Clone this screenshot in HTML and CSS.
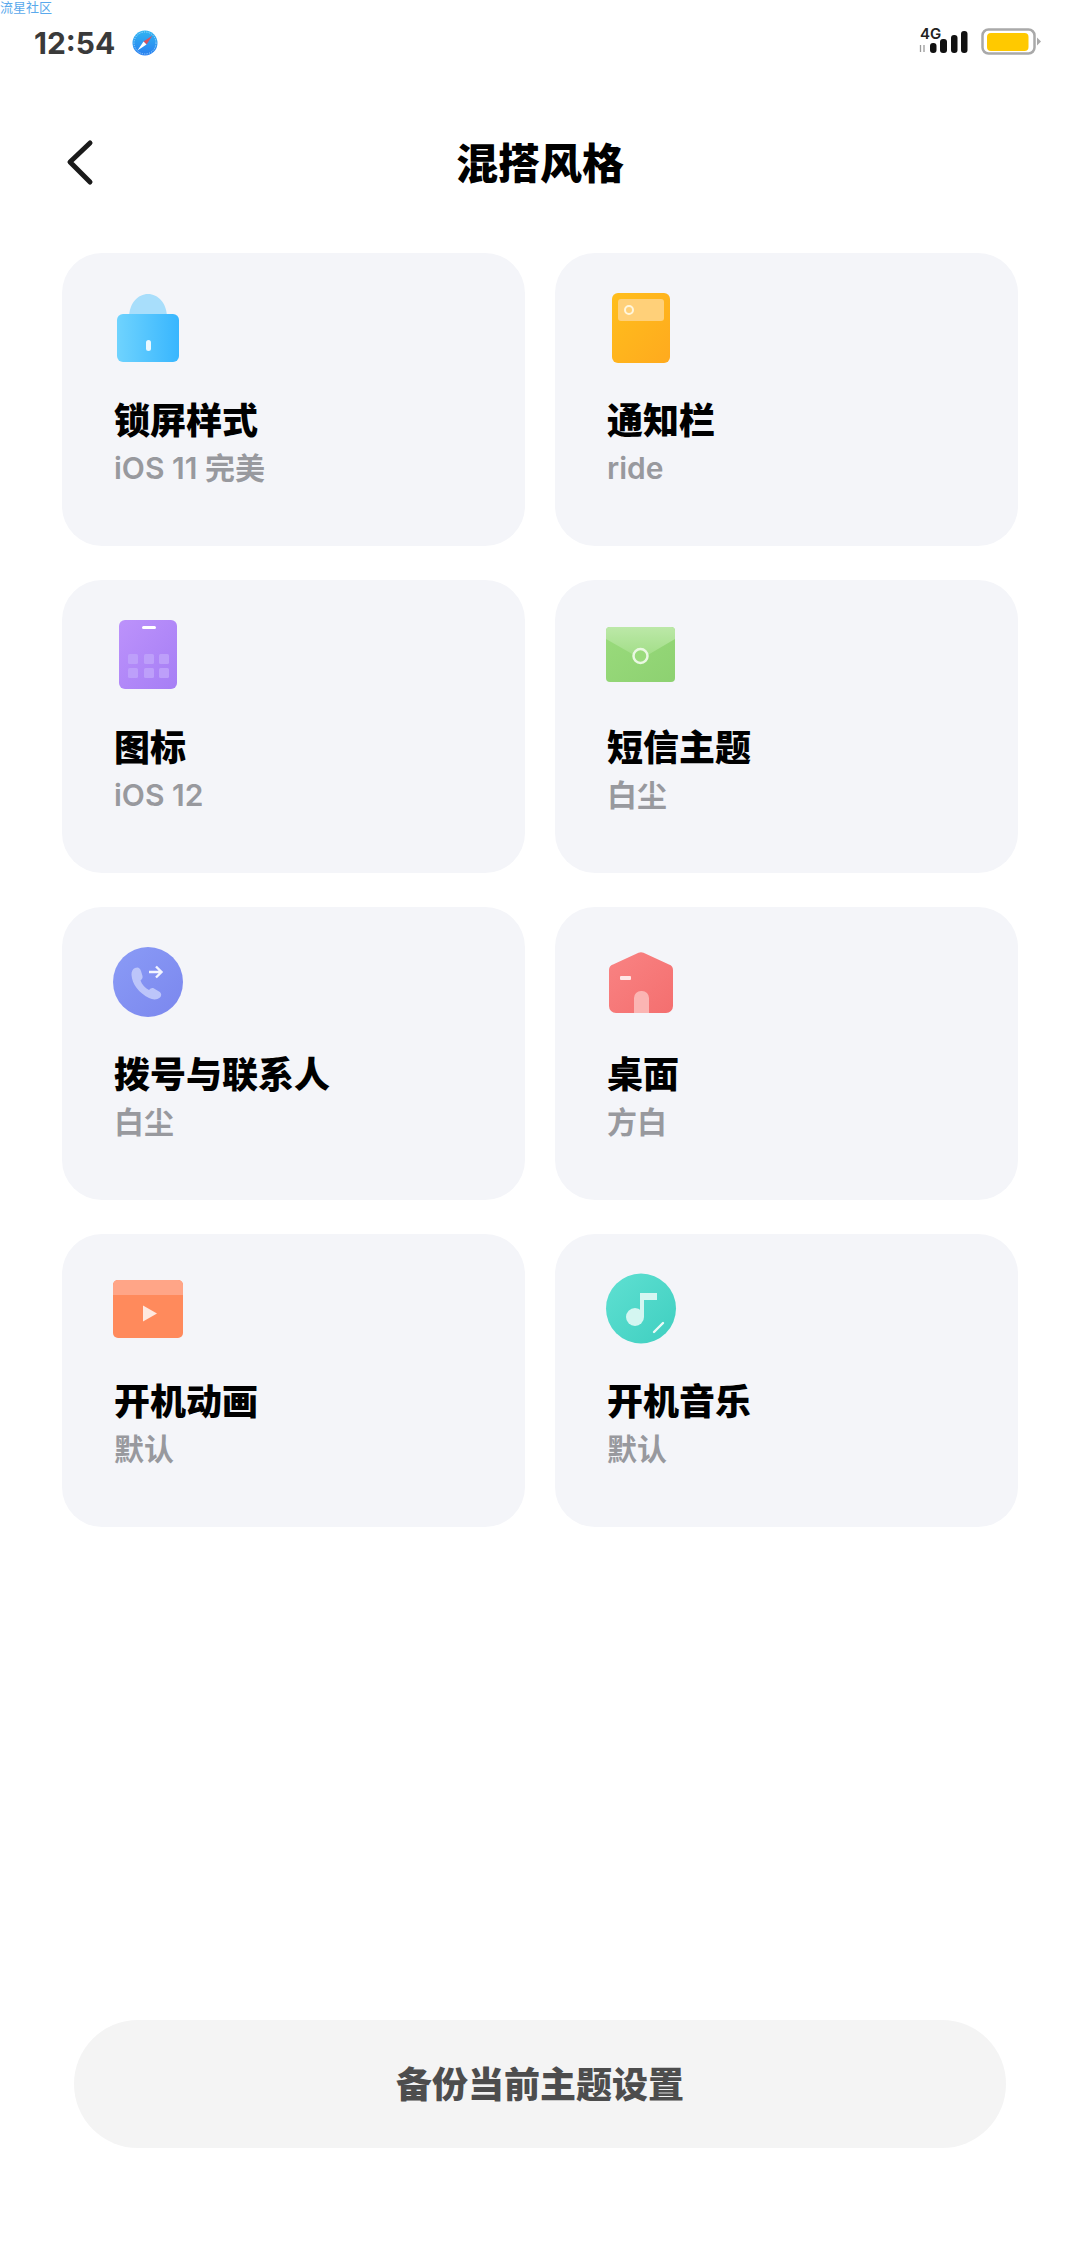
FILE: index.html
```html
<!DOCTYPE html>
<html lang="zh-CN">
<head>
  <meta charset="UTF-8" />
  <meta name="viewport" content="width=device-width, initial-scale=1.0"/>
  <title>混搭风格</title>
  <link rel="stylesheet" href="styles.css">
</head>
<body>

  <div class="watermark">流星社区</div>

  <div class="status-bar">
    <div class="status-left">
      <span class="time">12:54</span>
      <svg class="compass" width="26" height="26" viewBox="0 0 26 26">
        <defs>
          <linearGradient id="compassBg" x1="0" y1="0" x2="0" y2="1">
            <stop offset="0" stop-color="#2fb4f2"/>
            <stop offset="1" stop-color="#2a7ff0"/>
          </linearGradient>
        </defs>
        <circle cx="13" cy="13" r="12.5" fill="url(#compassBg)"/>
        <circle cx="13" cy="13" r="11" fill="none" stroke="#bfe6fb" stroke-width="0.8" stroke-dasharray="1.2 1.2"/>
        <polygon points="20.5,5.5 11.5,11.5 14.5,14.5" fill="#d8525f"/>
        <polygon points="5.5,20.5 11.5,11.5 14.5,14.5" fill="#ffffff"/>
      </svg>
    </div>
    <div class="status-right">
      <div class="signal">
        <span class="net">4G</span>
        <svg width="50" height="26" viewBox="0 0 50 26">
          <path d="M2.500 17v7M6 17v7" stroke="#9a9a9a" stroke-width="1.300" fill="none"/>
          <rect x="12" y="15" width="6.500" height="10" rx="3" fill="#111"/>
          <rect x="22" y="11" width="7" height="14" rx="3" fill="#111"/>
          <rect x="33" y="7" width="6.500" height="18" rx="3" fill="#111"/>
          <rect x="43" y="3" width="6.500" height="22" rx="3" fill="#111"/>
        </svg>
      </div>
      <svg class="battery" width="60" height="28" viewBox="0 0 60 28">
        <rect x="1.500" y="1.500" width="52" height="24" rx="6" fill="#fff" stroke="#a9a9a9" stroke-width="2.500"/>
        <rect x="6" y="5" width="41.500" height="18" rx="4" fill="#ffc900"/>
        <path d="M56 9.500l4 4-4 4z" fill="#a9a9a9"/>
      </svg>
    </div>
  </div>

  <header class="page-header">
    <svg class="back" width="40" height="50" viewBox="0 0 40 50">
      <path d="M30 6L10 25l20 20" fill="none" stroke="#1a1a1a" stroke-width="5" stroke-linecap="round" stroke-linejoin="round"/>
    </svg>
    <h1>混搭风格</h1>
  </header>

  <div class="theme-grid">

    <div class="card">
      <svg class="card-icon" width="80" height="80" viewBox="0 0 80 80">
        <defs>
          <linearGradient id="lockBg" x1="0" y1="0" x2="1" y2="0">
            <stop offset="0" stop-color="#6fd3fe"/>
            <stop offset="1" stop-color="#38b6fe"/>
          </linearGradient>
        </defs>
        <path d="M21 30C21 15 30 6 40 6s19 9 19 24z" fill="#a8defb"/>
        <rect x="9" y="26" width="62" height="48" rx="6" fill="url(#lockBg)"/>
        <rect x="38" y="52" width="5" height="11" rx="2.500" fill="#eaf8ff"/>
      </svg>
      <div class="card-title">锁屏样式</div>
      <div class="card-sub">iOS 11 完美</div>
    </div>

    <div class="card">
      <svg class="card-icon" width="80" height="80" viewBox="0 0 80 80">
        <defs>
          <linearGradient id="noteBg" x1="0" y1="0" x2="1" y2="1">
            <stop offset="0" stop-color="#ffbe1c"/>
            <stop offset="1" stop-color="#ffaa1e"/>
          </linearGradient>
        </defs>
        <rect x="11" y="5" width="58" height="70" rx="6" fill="url(#noteBg)"/>
        <rect x="17" y="11" width="46" height="22" rx="3" fill="#ffd079"/>
        <circle cx="28" cy="22" r="4" fill="none" stroke="#fff6dc" stroke-width="2"/>
      </svg>
      <div class="card-title">通知栏</div>
      <div class="card-sub">ride</div>
    </div>

    <div class="card">
      <svg class="card-icon" width="80" height="80" viewBox="0 0 80 80">
        <defs>
          <linearGradient id="iconBg" x1="0" y1="0" x2="1" y2="1">
            <stop offset="0" stop-color="#bc92fb"/>
            <stop offset="1" stop-color="#a67ef5"/>
          </linearGradient>
        </defs>
        <rect x="11" y="5" width="58" height="69" rx="6" fill="url(#iconBg)"/>
        <rect x="34" y="11" width="14" height="3" rx="1.500" fill="#fff"/>
        <g fill="#bd9ffa">
          <rect x="20" y="39" width="10" height="10" rx="1.500"/>
          <rect x="36" y="39" width="10" height="10" rx="1.500"/>
          <rect x="51" y="39" width="10" height="10" rx="1.500"/>
          <rect x="20" y="53" width="10" height="10" rx="1.500"/>
          <rect x="36" y="53" width="10" height="10" rx="1.500"/>
          <rect x="51" y="53" width="10" height="10" rx="1.500"/>
        </g>
      </svg>
      <div class="card-title">图标</div>
      <div class="card-sub">iOS 12</div>
    </div>

    <div class="card">
      <svg class="card-icon" width="80" height="80" viewBox="0 0 80 80">
        <defs>
          <linearGradient id="mailBg" x1="0" y1="0" x2="1" y2="1">
            <stop offset="0" stop-color="#9adb7c"/>
            <stop offset="1" stop-color="#8dd171"/>
          </linearGradient>
          <linearGradient id="mailFlap" x1="0" y1="0" x2="0" y2="1">
            <stop offset="0" stop-color="#bce8a8"/>
            <stop offset="1" stop-color="#9fdd84"/>
          </linearGradient>
        </defs>
        <rect x="5" y="12" width="69" height="55" rx="4" fill="url(#mailBg)"/>
        <path d="M5 24v-8a4 4 0 0 1 4-4h61a4 4 0 0 1 4 4v8L40 44z" fill="url(#mailFlap)"/>
        <circle cx="39.500" cy="41" r="7" fill="#9adb7c" stroke="#eaf8e2" stroke-width="2.500"/>
      </svg>
      <div class="card-title">短信主题</div>
      <div class="card-sub">白尘</div>
    </div>

    <div class="card">
      <svg class="card-icon" width="80" height="80" viewBox="0 0 80 80">
        <defs>
          <linearGradient id="phoneBg" x1="0" y1="0" x2="1" y2="1">
            <stop offset="0" stop-color="#8a9bf6"/>
            <stop offset="1" stop-color="#7b87ee"/>
          </linearGradient>
        </defs>
        <circle cx="40" cy="40" r="35" fill="url(#phoneBg)"/>
        <path d="M27 26c3-1.500 5 0 6 3l1.500 5c.5 2-.5 3-2 4.500 1.500 4 4.500 7.500 8.500 9.500 1.500-1.500 3-2.500 5-1.500l5 3c2.500 1.500 3 4 1 6-3 2.500-7 2.500-11 .5C31 51 24 42 23.500 33c-.2-3 1-6 3.500-7z" fill="#bcc5fa"/>
        <path d="M41 30h12M48 24.500l5.500 5.500-5.500 5.500" fill="none" stroke="#f2f4ff" stroke-width="2.400"/>
      </svg>
      <div class="card-title">拨号与联系人</div>
      <div class="card-sub">白尘</div>
    </div>

    <div class="card">
      <svg class="card-icon" width="80" height="80" viewBox="0 0 80 80">
        <defs>
          <linearGradient id="homeBg" x1="0" y1="0" x2="1" y2="1">
            <stop offset="0" stop-color="#f98383"/>
            <stop offset="1" stop-color="#f46f6f"/>
          </linearGradient>
        </defs>
        <path d="M37.500 10.800a6 6 0 0 1 5 0L68 22.500a6 6 0 0 1 4 5.500V64a7 7 0 0 1-7 7H15a7 7 0 0 1-7-7V28a6 6 0 0 1 4-5.500z" fill="url(#homeBg)"/>
        <rect x="19" y="34" width="11" height="4" rx="1" fill="#ffe6e6"/>
        <path d="M33 71V56a7 7 0 0 1 7-7h1a7 7 0 0 1 7 7v15z" fill="#fbb5b3"/>
      </svg>
      <div class="card-title">桌面</div>
      <div class="card-sub">方白</div>
    </div>

    <div class="card">
      <svg class="card-icon" width="80" height="80" viewBox="0 0 80 80">
        <rect x="5" y="11" width="70" height="58" rx="5" fill="#ff8a5c"/>
        <path d="M5 26V16a5 5 0 0 1 5-5h60a5 5 0 0 1 5 5v10z" fill="#ffa587"/>
        <path d="M35 36.500l14 8-14 8z" fill="#ffe9e0"/>
      </svg>
      <div class="card-title">开机动画</div>
      <div class="card-sub">默认</div>
    </div>

    <div class="card">
      <svg class="card-icon" width="80" height="80" viewBox="0 0 80 80">
        <defs>
          <linearGradient id="musicBg" x1="0" y1="0" x2="1" y2="1">
            <stop offset="0" stop-color="#5fe0d2"/>
            <stop offset="1" stop-color="#3fcfc0"/>
          </linearGradient>
        </defs>
        <circle cx="40" cy="39.500" r="35" fill="url(#musicBg)"/>
        <circle cx="34" cy="48" r="9" fill="#d4f6f1"/>
        <path d="M39 48V24h17v7H43v17z" fill="#d4f6f1"/>
        <path d="M53 63l9-9" stroke="#eafbf8" stroke-width="2.400" stroke-linecap="round"/>
      </svg>
      <div class="card-title">开机音乐</div>
      <div class="card-sub">默认</div>
    </div>

  </div>

  <button class="backup-btn">备份当前主题设置</button>

</body>
</html>
```

FILE: styles.css
```css
html, body {
  height: 100%;
}

body {
  margin: 0;
  padding: 0;
  position: relative;
  width: 1080px;
  height: 2248px;
  display: flex;
  flex-direction: column;
  background-color: #fff;
  font-family: "Noto Sans CJK SC", "Noto Sans", sans-serif;
  overflow: hidden;
}

.watermark {
  position: absolute;
  top: 0;
  left: 0;
  font-size: 13px;
  line-height: 14px;
  color: #5aa9ec;
}

.status-bar {
  height: 86px;
  padding: 0 39px 0 34px;
  display: flex;
  justify-content: space-between;
  align-items: center;
  box-sizing: border-box;
}

.status-left {
  display: flex;
  align-items: center;
  gap: 17px;
}

.time {
  font-family: Inter, "Liberation Sans", sans-serif;
  font-size: 30px;
  font-weight: 700;
  color: #3a3a3a;
}

.compass {
  display: block;
}

.status-right {
  display: flex;
  align-items: center;
  gap: 13px;
}

.signal {
  position: relative;
  width: 50px;
  height: 26px;
  margin-bottom: 4px;
}

.signal svg {
  display: block;
}

.net {
  position: absolute;
  left: 2px;
  top: -1px;
  font-family: Inter, "Liberation Sans", sans-serif;
  font-size: 15px;
  line-height: 13px;
  font-weight: 600;
  color: #222;
}

.battery {
  display: block;
  margin-bottom: 2px;
}

.page-header {
  position: relative;
  height: 100px;
  margin-top: 27px;
  display: flex;
  align-items: center;
  justify-content: center;
}

.back {
  position: absolute;
  left: 60px;
  top: 24px;
}

.page-header h1 {
  margin: 0 0 4px;
  font-size: 42px;
  line-height: 96px;
  font-weight: 900;
  color: #000;
}

.theme-grid {
  margin: 40px 62px 0;
  display: grid;
  grid-template-columns: 463px 463px;
  grid-auto-rows: 293px;
  column-gap: 30px;
  row-gap: 34px;
}

.card {
  padding: 35px 0 0 52px;
  box-sizing: border-box;
  background-color: #f4f5f9;
  border-radius: 40px;
}

.card-icon {
  display: block;
  margin-left: -6px;
}

.card-title {
  margin-top: 25px;
  font-size: 36px;
  line-height: 50px;
  font-weight: 900;
  color: #000;
}

.card-sub {
  margin-top: 5px;
  font-family: Inter, "Noto Sans CJK SC", sans-serif;
  font-size: 30px;
  line-height: 40px;
  font-weight: 600;
  color: #98999e;
}

.backup-btn {
  width: 932px;
  height: 128px;
  margin: auto 74px 100px;
  padding: 0 0 4px;
  border: none;
  border-radius: 64px;
  background-color: #f4f4f4;
  font-family: "Noto Sans CJK SC", sans-serif;
  font-size: 36px;
  font-weight: 900;
  color: #4d4d4d;
}
```
